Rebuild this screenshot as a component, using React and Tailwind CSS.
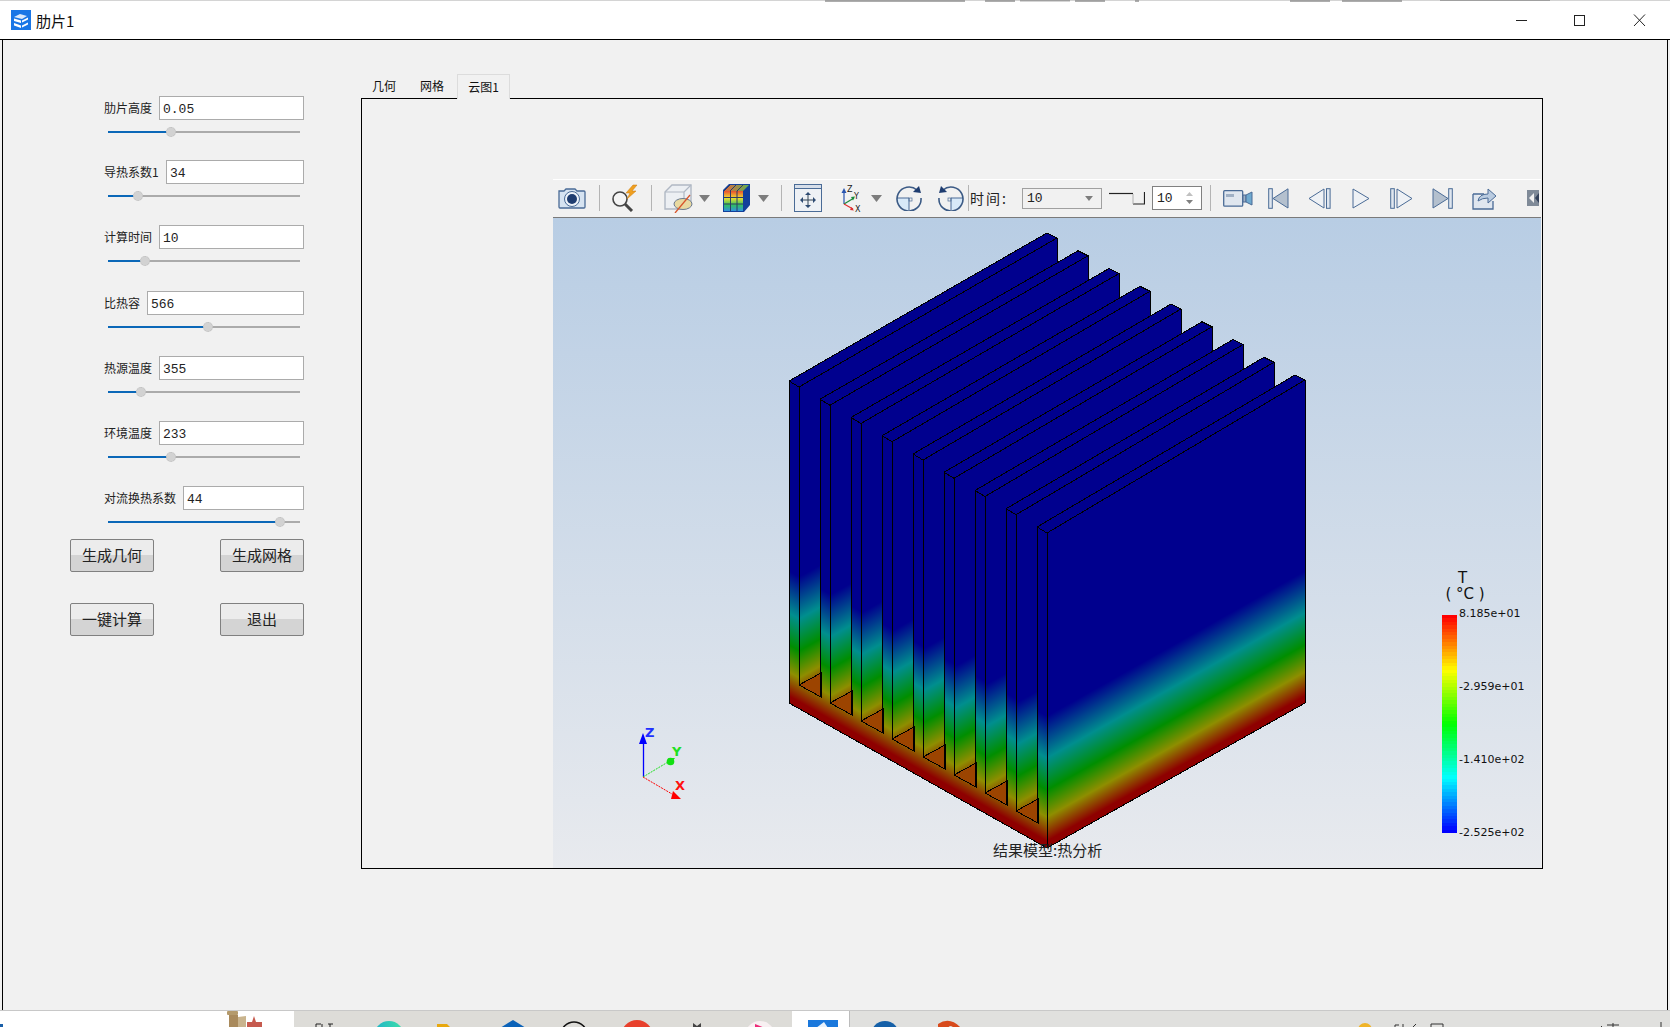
const MONO = "font-['Liberation_Mono','Noto_Sans_CJK_SC',monospace]";

const rows = [
  { label: '肋片高度', value: '0.05', inputW: 'w-[145px]', top: 'mt-0', fill: 63 },
  { label: '导热系数1', value: '34', inputW: 'w-[138px]', top: 'mt-[16px]', fill: 30 },
  { label: '计算时间', value: '10', inputW: 'w-[145px]', top: 'mt-[17px]', fill: 37 },
  { label: '比热容', value: '566', inputW: 'w-[157px]', top: 'mt-[18px]', fill: 100 },
  { label: '热源温度', value: '355', inputW: 'w-[145px]', top: 'mt-[17px]', fill: 33 },
  { label: '环境温度', value: '233', inputW: 'w-[145px]', top: 'mt-[17px]', fill: 63 },
  { label: '对流换热系数', value: '44', inputW: 'w-[121px]', top: 'mt-[17px]', fill: 172 },
];

function Slider({ fill }) {
  return (
    <div className="ml-[4px] flex h-[24px] w-[192px] items-center">
      <div className="h-[2px] bg-[#0b68b8]" style={{ width: fill }} />
      <div className="z-10 -mx-[5px] h-[10px] w-[10px] shrink-0 rounded-full border border-dotted border-[#bdbdbd] bg-[#d2d2d2]" />
      <div className="h-[2px] flex-1 bg-[#ababab]" />
    </div>
  );
}

function Row({ r }) {
  return (
    <div className={`${r.top} ml-[101px] w-[200px]`}>
      <div className="flex h-[24px] items-center justify-between">
        <span className="text-[12px] leading-none whitespace-nowrap text-[#222]">{r.label}</span>
        <div className={`${r.inputW} h-[24px] border border-[#ababab] bg-white pl-[3px] text-[13px] leading-[25px] text-[#222] ${MONO}`}>
          {r.value}
        </div>
      </div>
      <Slider fill={r.fill} />
    </div>
  );
}

function Btn({ children }) {
  return (
    <div className="flex h-[33px] w-[84px] items-center justify-center rounded-[2px] border border-[#808080] bg-[linear-gradient(#ececec_50%,#d4d4d4_50%)] pb-[2px] text-[15px] leading-none text-[#222]">
      {children}
    </div>
  );
}

function Sep() {
  return <div className="h-[26px] w-px shrink-0 bg-[#b4b4b4]" />;
}

function Arrow({ cls }) {
  return (
    <svg className={cls} width="11" height="7" viewBox="0 0 11 7">
      <path d="M0 0H11L5.5 7Z" fill="#7d7d7d" />
    </svg>
  );
}

const BL = '#4a6b96';

function Toolbar() {
  return (
    <div className="flex h-[39px] shrink-0 items-center border-t border-b border-t-white border-b-[#7a7a7a] bg-[#f1f1f1] pb-[1px]">
      <svg className="ml-[5px] shrink-0" width="28" height="24" viewBox="0 0 28 24">
        <path d="M1 5h5l2-2h9l2 2h7q1 0 1 1v15q0 1-1 1H2q-1 0-1-1V6q0-1 0-1Z" fill="#d6e3f1" stroke={BL} strokeWidth="1.3" />
        <circle cx="14" cy="13" r="7.5" fill="#eef3f9" stroke={BL} />
        <circle cx="14" cy="13" r="5" fill="#1f3d70" />
      </svg>
      <div className="ml-[13px]"><Sep /></div>
      <svg className="ml-[11px] shrink-0" width="29" height="28" viewBox="0 0 29 28">
        <circle cx="9" cy="15" r="7" fill="#f4f4f4" stroke="#444" strokeWidth="1.6" />
        <path d="M14 20l7 7" stroke="#444" strokeWidth="3" />
        <path d="M22 1l-7 8h4l-3 6 9-8h-4l5-6Z" fill="#f0a020" stroke="#c87a10" strokeWidth=".5" />
      </svg>
      <div className="ml-[11px]"><Sep /></div>
      <svg className="ml-[12px] shrink-0" width="29" height="29" viewBox="0 0 29 29">
        <path d="M1 8l7-7h19v17l-7 7H1Z" fill="#eceff3" stroke="#b0b8c4" strokeWidth="1.4" />
        <path d="M1 8h19v17M20 8l7-7" fill="none" stroke="#b0b8c4" strokeWidth="1.2" />
        <ellipse cx="19" cy="20" rx="9" ry="5.5" fill="#e8d9a0" stroke="#6a7a90" />
        <path d="M26 11L11 29" stroke="#d8542a" strokeWidth="1.3" />
      </svg>
      <Arrow cls="ml-[6px] shrink-0" />
      <svg className="ml-[13px] shrink-0" width="27" height="28" viewBox="0 0 27 28">
        <path d="M0 6l6-6h21v21l-6 7H0Z" fill="#123f9a" />
        <rect x="1" y="7" width="19" height="20" fill="url(#cc)" />
        <path d="M1 7l6-6h19l-6 6Z" fill="url(#cd)" />
        <path d="M7.5 7v20M14 7v20M1 13.5h19M1 20h19M7 1l-6 6M13 1L7 7M20 1l-6 6" stroke="#2b3a66" strokeWidth="1" fill="none" />
        <defs>
          <linearGradient id="cc" x1="0" y1="0" x2="0" y2="1">
            <stop offset="0" stopColor="#e85030" />
            <stop offset=".35" stopColor="#f0e030" />
            <stop offset=".7" stopColor="#30c060" />
            <stop offset="1" stopColor="#3090e0" />
          </linearGradient>
          <linearGradient id="cd" x1="0" y1="0" x2="1" y2="0">
            <stop offset="0" stopColor="#e06840" />
            <stop offset="1" stopColor="#60b050" />
          </linearGradient>
        </defs>
      </svg>
      <Arrow cls="ml-[8px] shrink-0" />
      <div className="ml-[12px]"><Sep /></div>
      <svg className="ml-[12px] shrink-0" width="28" height="28" viewBox="0 0 28 28">
        <rect x=".5" y=".5" width="27" height="27" fill="#eef1f5" stroke={BL} />
        <rect x=".5" y=".5" width="27" height="4" fill="#d6dee9" stroke={BL} />
        <path d="M14 9v14M7 16h14" stroke="#345" strokeWidth="1" />
        <path d="M14 8l-3 3h6ZM14 24l-3-3h6ZM6 16l3-3v6ZM22 16l-3-3v6Z" fill="#2d4a72" />
      </svg>
      <svg className="ml-[17px] shrink-0" width="23" height="29" viewBox="0 0 23 29">
        <path d="M5 20V6" stroke="#2a55b0" strokeWidth="1.2" />
        <path d="M5 4l-2.500 5h5Z" fill="#2a55b0" />
        <path d="M5 20l10-6" stroke="#1a8a3a" strokeWidth="1.2" />
        <path d="M16 12.500l-4 .5 2 3.500Z" fill="#1a8a3a" />
        <path d="M5 20l9 5" stroke="#e03030" strokeWidth="1.2" />
        <path d="M15 26.500l-4-.5 1.500-3Z" fill="#e03030" />
        <text x="8" y="8" fontSize="8" fontFamily="DejaVu Sans" fill="#222">Z</text>
        <text x="15" y="15" fontSize="8" fontFamily="DejaVu Sans" fill="#222">Y</text>
        <text x="16" y="28" fontSize="8" fontFamily="DejaVu Sans" fill="#222">X</text>
      </svg>
      <Arrow cls="ml-[9px] shrink-0" />
      <svg className="ml-[14px] shrink-0" width="26" height="26" viewBox="0 0 26 26">
        <path d="M1 13a12 12 0 0 0 12 12V13Z" fill="#d8e9f8" />
        <path d="M13 13v12M1 13h12" stroke={BL} strokeWidth="1" />
        <rect x="13" y="13" width="3" height="3" fill="none" stroke={BL} strokeWidth=".7" />
        <path d="M21 5A12 12 0 1 0 25 13" fill="none" stroke="#3b5a85" strokeWidth="1.6" />
        <path d="M25 8l-8-1 6-6Z" fill="#1f3d70" />
      </svg>
      <svg className="ml-[16px] shrink-0" width="26" height="26" viewBox="0 0 26 26">
        <path d="M25 13a12 12 0 0 1-12 12V13Z" fill="#d8e9f8" />
        <path d="M13 13v12M13 13h12" stroke={BL} strokeWidth="1" />
        <rect x="10" y="13" width="3" height="3" fill="none" stroke={BL} strokeWidth=".7" />
        <path d="M5 5A12 12 0 1 1 1 13" fill="none" stroke="#3b5a85" strokeWidth="1.6" />
        <path d="M1 8l8-1-6-6Z" fill="#1f3d70" />
      </svg>
      <div className="ml-[4px]"><Sep /></div>
      <span className="ml-[1px] w-[52px] shrink-0 text-[14px] leading-none tracking-[2px] whitespace-nowrap text-[#222]">时间:</span>
      <div className={`flex h-[21px] w-[80px] shrink-0 items-center justify-between border border-[#a0a0a0] pr-[8px] pl-[4px] text-[13px] leading-none text-[#222] ${MONO}`}>
        <span>10</span>
        <Arrow cls="w-[8px] h-[5px]" />
      </div>
      <svg className="ml-[7px] shrink-0" width="36" height="14" viewBox="0 0 36 14">
        <path d="M0 2.500H24" stroke="#222" strokeWidth="1.2" />
        <path d="M24 13H35.500V1" fill="none" stroke="#222" strokeWidth="1.2" />
        <path d="M24 3v10" stroke="#b0b0b0" strokeWidth="1" />
      </svg>
      <div className={`ml-[7px] flex h-[24px] w-[50px] shrink-0 items-center justify-between border border-[#808080] bg-white pr-[8px] pl-[4px] text-[13px] leading-none text-[#222] ${MONO}`}>
        <span>10</span>
        <svg width="7" height="14" viewBox="0 0 7 14">
          <path d="M3.500 1L7 5H0Z" fill="#c0c0c0" />
          <path d="M3.500 13L7 9H0Z" fill="#808080" />
        </svg>
      </div>
      <div className="ml-[8px]"><Sep /></div>
      <svg className="ml-[12px] shrink-0" width="30" height="17" viewBox="0 0 30 17">
        <rect x=".7" y=".7" width="19" height="15.500" rx="1" fill="#dfe6ef" stroke={BL} strokeWidth="1.3" />
        <rect x="3" y="4" width="8" height="3" fill="#9fb0c5" />
        <path d="M20 5h3v7h-3Z" fill="#9fb0c5" stroke={BL} />
        <path d="M23 5l6-3v13l-6-3Z" fill="#6fa9cf" stroke={BL} />
      </svg>
      <svg className="ml-[15px] shrink-0" width="21" height="21" viewBox="0 0 21 21">
        <rect x=".7" y=".7" width="3.600" height="19.600" fill="#dfe6ef" stroke={BL} />
        <path d="M20 .8V20L5 10.500Z" fill="#b4c0ce" stroke={BL} />
      </svg>
      <svg className="ml-[19px] shrink-0" width="23" height="21" viewBox="0 0 23 21">
        <path d="M16 1V20L1 10.500Z" fill="#eef1f5" stroke={BL} />
        <rect x="18.500" y=".7" width="3.600" height="19.600" fill="#dfe6ef" stroke={BL} />
      </svg>
      <svg className="ml-[21px] shrink-0" width="18" height="21" viewBox="0 0 18 21">
        <path d="M1 1V20L17 10.500Z" fill="#eef1f5" stroke={BL} />
      </svg>
      <svg className="ml-[20px] shrink-0" width="23" height="21" viewBox="0 0 23 21">
        <rect x=".7" y=".7" width="3.600" height="19.600" fill="#dfe6ef" stroke={BL} />
        <path d="M7 1V20L22 10.500Z" fill="#eef1f5" stroke={BL} />
      </svg>
      <svg className="ml-[19px] shrink-0" width="21" height="21" viewBox="0 0 21 21">
        <path d="M1 .8V20L16 10.500Z" fill="#b4c0ce" stroke={BL} />
        <rect x="16.700" y=".7" width="3.600" height="19.600" fill="#dfe6ef" stroke={BL} />
      </svg>
      <svg className="ml-[19px] shrink-0" width="26" height="24" viewBox="0 0 26 24">
        <path d="M1 8h11v-0M1 8v15h20v-8" fill="#dfe6ef" stroke={BL} strokeWidth="1.300" />
        <path d="M6 15q1-7 10-7V3l8 7-8 7v-5q-6 0-10 3Z" fill="#b9cbe0" stroke={BL} />
      </svg>
      <svg className="ml-[29px] shrink-0" width="12" height="18" viewBox="0 0 12 18">
        <rect x="0" y="1" width="12" height="16" fill="#7f8a98" />
        <path d="M2 9l5-5v10Z" fill="#f0f0f0" />
        <path d="M12 4l-4 5 4 5Z" fill="#33415a" />
      </svg>
    </div>
  );
}

const ZSTOPS = [
  [322, '#00008e'],
  [132, '#00008e'],
  [90, '#008e8e'],
  [58, '#008e00'],
  [31, '#8e8e00'],
  [7, '#8e0000'],
  [0, '#8e0000'],
];

function Stops() {
  return ZSTOPS.map(([z, c]) => <stop key={z} offset={(322 - z) / 322} stopColor={c} />);
}

const fins = Array.from({ length: 9 }, (_, i) => {
  const A = [789 + 31 * i, 381 + 18.25 * i];
  const B = [799 + 31 * i, 387 + 18.25 * i];
  const C = [1057 + 31 * i, 238 + 17.75 * i];
  const D = [1047 + 31 * i, 233 + 17.75 * i];
  const P = i < 8 ? [799 + 31 * i, 685 + 18 * i] : [1047, 848];
  const Q = [821 + 31 * i, 673 + 18 * i];
  const R = [821 + 31 * i, 697 + 18 * i];
  const baseY = i < 8 ? P[1] + 24 : 848;
  const t = baseY + 0.5625 * P[0];
  return { i, A, B, C, D, P, Q, R, t };
});

const pts = (...a) => a.map((p) => p.join(',')).join(' ');

function Model() {
  let lines = 'M789 381V703L1047 848L1305 703V380';
  fins.forEach((f) => {
    const prevR = f.i === 0 ? [789, 703] : fins[f.i - 1].R;
    lines += ` M${f.A} L${f.D} L${f.C} L${f.B} L${f.A}`;
    lines += ` M${f.A} L${prevR} M${f.B} L${f.P}`;
    if (f.i < 8) {
      lines += ` M${f.C} V${f.C[1] + 24}`;
      lines += ` M${f.P} L${f.Q} L${f.R} L${f.P}`;
    }
  });
  return (
    <g shapeRendering="crispEdges">
      <defs>
        <linearGradient id="endG" gradientUnits="userSpaceOnUse" x1="0" y1="-322" x2="0" y2="0" gradientTransform="matrix(1 0.5625 0 1 0 259.2)">
          <Stops />
        </linearGradient>
        {fins.map((f) => (
          <linearGradient key={f.i} id={`fin${f.i}`} gradientUnits="userSpaceOnUse" x1="0" y1="-322" x2="0" y2="0" gradientTransform={`matrix(1 -0.5625 0 1 0 ${f.t})`}>
            <Stops />
          </linearGradient>
        ))}
      </defs>
      <polygon points="789,679 1047,824 1047,848 789,703" fill="url(#endG)" />
      {fins.map((f) => {
        const prevBottom = f.i === 0 ? [789, 703] : f.i === 8 ? [1037, 842] : fins[f.i - 1].R;
        const farBottom = f.i === 8 ? [1305, 703] : [f.C[0], f.P[1] - 145];
        return (
          <g key={f.i}>
            <polygon points={pts(f.B, f.C, farBottom, f.P)} fill={`url(#fin${f.i})`} />
            <polygon points={pts(f.A, f.D, f.C, f.B)} fill="#00008e" />
            <polygon points={pts(f.A, f.B, f.P, prevBottom)} fill="url(#endG)" />
            {f.i < 8 && <polygon points={pts(f.P, f.Q, f.R)} fill="#9c4400" />}
          </g>
        );
      })}
      <path d={lines} fill="none" stroke="#000" strokeWidth="1" />
    </g>
  );
}

function Triad() {
  return (
    <g>
      <path d="M643.500 777V742" stroke="#0000ff" strokeWidth="1.300" />
      <path d="M643 733L639 744H647Z" fill="#0000ff" />
      <path d="M643 777L668 762" stroke="#1fe01f" strokeWidth="1" strokeDasharray="2 1" />
      <circle cx="670.500" cy="761.500" r="3.800" fill="#12e012" />
      <path d="M668 758h7l-3 4Z" fill="#12e012" />
      <path d="M643 777L672 794" stroke="#ff0000" strokeWidth="1" strokeDasharray="2 1" />
      <path d="M671 799l2-8 8 8Z" fill="#ff0000" />
      <text x="645" y="737" fontSize="13" fontWeight="700" fontFamily="DejaVu Sans" fill="#2030ff">Z</text>
      <text x="672" y="756" fontSize="13" fontWeight="700" fontFamily="DejaVu Sans" fill="#20e020">Y</text>
      <text x="675" y="790" fontSize="13" fontWeight="700" fontFamily="DejaVu Sans" fill="#ff1010">X</text>
    </g>
  );
}

function Legend() {
  const bands = Array.from({ length: 64 }, (_, i) => i);
  return (
    <div className="absolute top-[348px] left-[884px] w-[100px] font-['DejaVu_Sans',sans-serif] text-[#111]">
      <div className="ml-[7px] w-[42px] text-center text-[15px] leading-[18px]">
        <div className="mt-[3px] -ml-[5px] h-[16px]">T</div>
        <div>( °C )</div>
      </div>
      <div className="mt-[12px] flex">
        <div className="ml-[5px] flex h-[218px] w-[15px] flex-col">
          {bands.map((b) => (
            <div key={b} className="flex-1" style={{ background: `hsl(${(b / 63) * 240} 100% 50%)` }} />
          ))}
        </div>
        <div className="-mt-[9px] ml-[2px] flex h-[235px] flex-col justify-between text-[11px] leading-[16px] whitespace-nowrap">
          <div>8.185e+01</div>
          <div>-2.959e+01</div>
          <div>-1.410e+02</div>
          <div>-2.525e+02</div>
        </div>
      </div>
    </div>
  );
}

function Viewer() {
  return (
    <div className="flex h-[689px] w-[988px] flex-col">
      <Toolbar />
      <div className="relative h-[650px] bg-[linear-gradient(#b8cde4,#e8eaee)]">
        <svg className="block" width="988" height="650" viewBox="553 218 988 650">
          <Model />
          <Triad />
        </svg>
        <Legend />
        <div className="absolute top-[623px] left-[440px] text-[15px] leading-[18px] whitespace-nowrap text-[#222]">结果模型:热分析</div>
      </div>
    </div>
  );
}

function Tabs() {
  return (
    <div className="mt-[34px] flex h-[24px] text-[12px] leading-none text-[#111]">
      <div className="ml-[11px] flex items-center">几何</div>
      <div className="ml-[24px] flex items-center">网格</div>
      <div className="relative z-10 -mb-px ml-[13px] flex h-[25px] w-[53px] items-center justify-center border border-b-0 border-[#dcdcdc] bg-[#f1f1f1]">云图1</div>
    </div>
  );
}

function Taskbar() {
  return (
    <div className="flex h-[17px] shrink-0 overflow-hidden border-t border-t-[#c8c8c8]">
      <div className="h-full w-[294px] shrink-0 bg-white">
        <svg className="block" width="294" height="17" viewBox="0 0 294 17">
          <rect x="0" y="13" width="3" height="4" fill="#1a5fa8" />
          <rect x="227" y="0" width="11" height="4" rx="1" fill="#b49a6c" />
          <rect x="229" y="4" width="9" height="13" fill="#a98a5c" />
          <path d="M238 6l8-1v12h-8Z" fill="#c9b48e" />
          <path d="M254 5l2 6h6v6h-15v-6h5Z" fill="#c65a4e" />
        </svg>
      </div>
      <div className="h-full w-[498px] shrink-0 bg-[#dddcd8]">
        <svg className="block" width="498" height="17" viewBox="294 0 498 17">
          <path d="M316 13h5M316 13v4M322 13v4M328 13h5M330 13v4" stroke="#222" strokeWidth="1" />
          <defs>
            <linearGradient id="ed" x1="0" y1="0" x2="1" y2="0">
              <stop offset="0" stopColor="#1fb4c8" />
              <stop offset="1" stopColor="#3fe0a8" />
            </linearGradient>
          </defs>
          <circle cx="389" cy="25" r="15" fill="url(#ed)" />
          <path d="M437 13h10l3 3h15v1h-28Z" fill="#e8a80e" />
          <path d="M500 17l13-8 13 8Z" fill="#0b62b8" />
          <circle cx="574" cy="24" r="13" fill="none" stroke="#111" strokeWidth="1.600" />
          <circle cx="637" cy="25" r="16" fill="#e8402c" />
          <path d="M693 12l4 3 4-3v5h-8Z" fill="#444" />
          <circle cx="760" cy="25" r="15" fill="#f8f0f2" />
          <path d="M755 13l10 4h-10Z" fill="#ee2a78" />
        </svg>
      </div>
      <div className="h-full w-[57px] shrink-0 bg-white">
        <svg className="block" width="57" height="17" viewBox="792 0 57 17">
          <rect x="808" y="9" width="30" height="8" fill="#1a78dc" />
          <path d="M816 17l8-6 4 6Z" fill="#e8f2fc" />
        </svg>
      </div>
      <div className="h-full flex-1 border-l border-l-[#bcbcbc] bg-[#e0e0de]">
        <svg className="block" width="821" height="17" viewBox="849 0 821 17">
          <circle cx="884" cy="24" r="14" fill="#1560a8" />
          <circle cx="887" cy="26" r="10" fill="#e8eef6" />
          <circle cx="887" cy="24" r="6" fill="#12305c" />
          <path d="M937 13q12-8 23 4l-7 0q-4-4-6 0h-10Z" fill="#d84a1c" />
          <circle cx="1364" cy="19" r="7" fill="#f0b428" />
          <path d="M1394 14h4M1394 14v3M1402 13v4M1415 13l-4 4M1430 13h12M1430 13v4M1442 13v4" stroke="#333" strokeWidth="1" />
          <path d="M1600 15l2 2M1612 12v5M1606 14h12M1608 17h8M1660 11v6" stroke="#333" strokeWidth="1" />
        </svg>
      </div>
    </div>
  );
}

function TitleBar() {
  return (
    <div className="flex h-[40px] shrink-0 flex-col border-b border-b-black bg-white">
      <svg className="block shrink-0" width="1670" height="3" viewBox="0 0 1670 3">
        <rect width="1670" height="1" fill="#d4d4d4" />
        <path d="M825 0h140v2h-140ZM985 0h30v2h-30ZM1020 0h50v1.500h-50ZM1075 0h30v2h-30ZM1135 0h4v2h-4ZM1290 0h40v2h-40ZM1342 0h60v2h-60ZM1440 0h110v1h-110Z" fill="#8a8a8a" opacity=".7" />
      </svg>
      <div className="flex flex-1 items-center pb-[2px]">
        <svg className="ml-[11px] shrink-0" width="20" height="20" viewBox="0 0 20 20">
          <rect width="20" height="20" fill="#1976e6" />
          <path d="M3 7l6-3 7 2-5 3Z" fill="#dbe9fb" />
          <path d="M3 8.500l7 2v2.500l-7-2ZM3 13l7 2.500V18l-7-2.500ZM11 10.500l6-3v2l-6 3ZM11 15.500l6-3v2l-6 3Z" fill="#fff" />
        </svg>
        <span className="ml-[5px] text-[15px] leading-none text-[#111]">肋片1</span>
        <svg className="ml-auto mr-[24px] shrink-0" width="130" height="14" viewBox="0 0 130 14">
          <path d="M0 7.500H11" stroke="#222" strokeWidth="1" />
          <rect x="58.500" y="2.500" width="10" height="10" fill="none" stroke="#222" strokeWidth="1" />
          <path d="M118 1.500L129 13M129 1.500L118 13" stroke="#222" strokeWidth="1" fill="none" />
        </svg>
      </div>
    </div>
  );
}

export default function App() {
  return (
    <div className="flex h-[1027px] w-[1670px] flex-col overflow-hidden bg-[#f1f1f1] font-['Noto_Sans_CJK_SC','Noto_Sans',sans-serif]">
      <TitleBar />
      <div className="mx-[2px] flex flex-1 border-x border-x-black bg-[#f1f1f1]">
        <div className="w-[358px] shrink-0 pt-[56px]">
          {rows.map((r) => (
            <Row key={r.label} r={r} />
          ))}
          <div className="mt-[5px] ml-[67px] flex w-[234px] justify-between">
            <Btn>生成几何</Btn>
            <Btn>生成网格</Btn>
          </div>
          <div className="mt-[31px] ml-[67px] flex w-[234px] justify-between">
            <Btn>一键计算</Btn>
            <Btn>退出</Btn>
          </div>
        </div>
        <div className="w-[1182px] shrink-0">
          <Tabs />
          <div className="flex h-[771px] flex-col items-start border border-black pt-[80px] pl-[191px]">
            <Viewer />
          </div>
        </div>
      </div>
      <Taskbar />
    </div>
  );
}
